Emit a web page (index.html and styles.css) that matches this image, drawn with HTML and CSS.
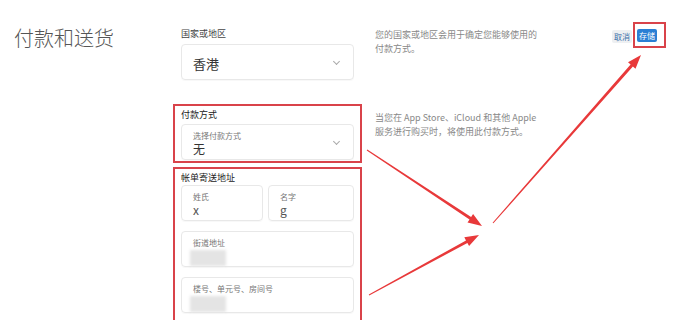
FILE: index.html
```html
<!DOCTYPE html>
<html lang="zh-CN">
<head>
    <meta charset="UTF-8">
    <meta name="viewport" content="width=device-width, initial-scale=1.0">
    <title>付款和送货</title>
    <link rel="stylesheet" href="styles.css">
</head>
<body>

    <div class="page">
        <h1 class="title">付款和送货</h1>

        <!-- Country -->
        <div class="section">
            <div class="label">国家或地区</div>
            <div class="field select">
                <span class="value">香港</span>
                <span class="chevron"></span>
            </div>
        </div>
        <p class="desc">您的国家或地区会用于确定您能够使用的<br>付款方式。</p>
        <div class="actions">
            <button class="btn cancel">取消</button>
            <span class="mark"><button class="btn save">存储</button></span>
        </div>

        <!-- Payment -->
        <div class="section marked payment">
            <div class="label strong">付款方式</div>
            <div class="field select">
                <div>
                    <div class="hint">选择付款方式</div>
                    <div class="value">无</div>
                </div>
                <span class="chevron"></span>
            </div>
        </div>
        <p class="desc">当您在 App Store、iCloud 和其他 Apple<br>服务进行购买时，将使用此付款方式。</p>
        <div></div>

        <!-- Billing address -->
        <div class="section marked billing">
            <div class="label strong">帐单寄送地址</div>
            <div class="name-row">
                <div class="field">
                    <div class="hint">姓氏</div>
                    <div class="value small">x</div>
                </div>
                <div class="field">
                    <div class="hint">名字</div>
                    <div class="value small">g</div>
                </div>
            </div>
            <div class="field">
                <div class="hint">街道地址</div>
                <div class="blur"></div>
            </div>
            <div class="field">
                <div class="hint">楼号、单元号、房间号</div>
                <div class="blur"></div>
            </div>
        </div>
        <div></div>
        <div></div>
    </div>

    <!-- Annotation arrows -->
    <svg class="arrows" width="683" height="320" viewBox="0 0 683 320">
        <polygon points="366.7,150.4 469.5,219.6 467.5,222.5 482,226 473.1,214.1 471.1,217.1 367.3,149.6" />
        <polygon points="369.2,295.4 467.4,243.0 469.1,246.1 479,235 464.3,237.3 466.0,240.4 368.8,294.6" />
        <polygon points="493.4,223.3 632.9,66.5 635.5,68.8 641,55 628.0,62.2 630.6,64.5 492.6,222.7" />
    </svg>

</body>
</html>
```

FILE: styles.css
```css
body {
    margin: 0;
    padding: 0;
    background: #fff;
    font-family: "Noto Sans CJK SC", "Noto Sans", sans-serif;
    color: #333;
    overflow: hidden;
}

.page {
    display: grid;
    grid-template-columns: 173px 189px 1fr auto;
    grid-auto-rows: auto;
    row-gap: 4px;
    padding-top: 21px;
}

.title {
    grid-row: 1 / span 3;
    margin: 4px 0 0 14px;
    font-size: 20px;
    font-weight: 300;
    line-height: 26px;
    color: #555;
}

.section {
    border: 2px solid transparent;
    padding: 5px 6px 18px;
}

.section.marked {
    border-color: #d9434a;
    padding-top: 3px;
}

.section.payment {
    padding-bottom: 1px;
}

.section.billing {
    padding-bottom: 8px;
    display: flex;
    flex-direction: column;
    gap: 10px;
}

.section.billing .label {
    margin-bottom: -9px;
}

.label {
    font-size: 9px;
    line-height: 12px;
    margin-bottom: 4px;
    color: #444;
}

.label.strong {
    color: #222;
    margin-bottom: 3px;
}

.field {
    box-sizing: border-box;
    height: 36px;
    border: 1px solid #e8e8e8;
    border-radius: 4px;
    padding: 5px 11px 3px;
    box-shadow: 0 1px 1px rgba(0, 0, 0, 0.03);
}

.select {
    display: flex;
    align-items: center;
    justify-content: space-between;
}

.select > .value {
    font-size: 13px;
    color: #333;
}

.hint {
    font-size: 8px;
    line-height: 11px;
    color: #777;
}

.value {
    font-size: 12px;
    line-height: 14px;
    margin-top: 1px;
    color: #333;
}

.value.small {
    color: #555;
}

.chevron {
    width: 4px;
    height: 4px;
    border-right: 1px solid #aaa;
    border-bottom: 1px solid #aaa;
    transform: rotate(45deg);
    margin: 0 3px 3px 0;
}

.name-row {
    display: grid;
    grid-template-columns: 82px 86px;
    gap: 5px;
}

.blur {
    width: 36px;
    height: 16px;
    margin: 2px 0 0 -3px;
    background: #e4e4e4;
    filter: blur(1.5px);
}

.desc {
    margin: 7px 0 0 13px;
    font-size: 9px;
    line-height: 14px;
    color: #888;
}

.actions {
    display: flex;
    align-items: flex-start;
    gap: 1px;
    padding-right: 17px;
}

.btn {
    display: block;
    box-sizing: border-box;
    height: 13px;
    margin: 0;
    border: none;
    border-radius: 2px;
    font-family: inherit;
    font-size: 8px;
    line-height: 13px;
    padding: 0 2px;
    cursor: pointer;
}

.btn.cancel {
    margin-top: 9px;
    background: #eef0f2;
    color: #3a6ea8;
}

.mark {
    display: block;
    margin-top: 1px;
    border: 2px solid #d9434a;
    padding: 5px 7px 4px 2px;
}

.btn.save {
    width: 20px;
    background: #2a7fd4;
    color: #fff;
}

.arrows {
    position: absolute;
    top: 0;
    left: 0;
    pointer-events: none;
}

.arrows polygon {
    fill: #e8393a;
}
```
